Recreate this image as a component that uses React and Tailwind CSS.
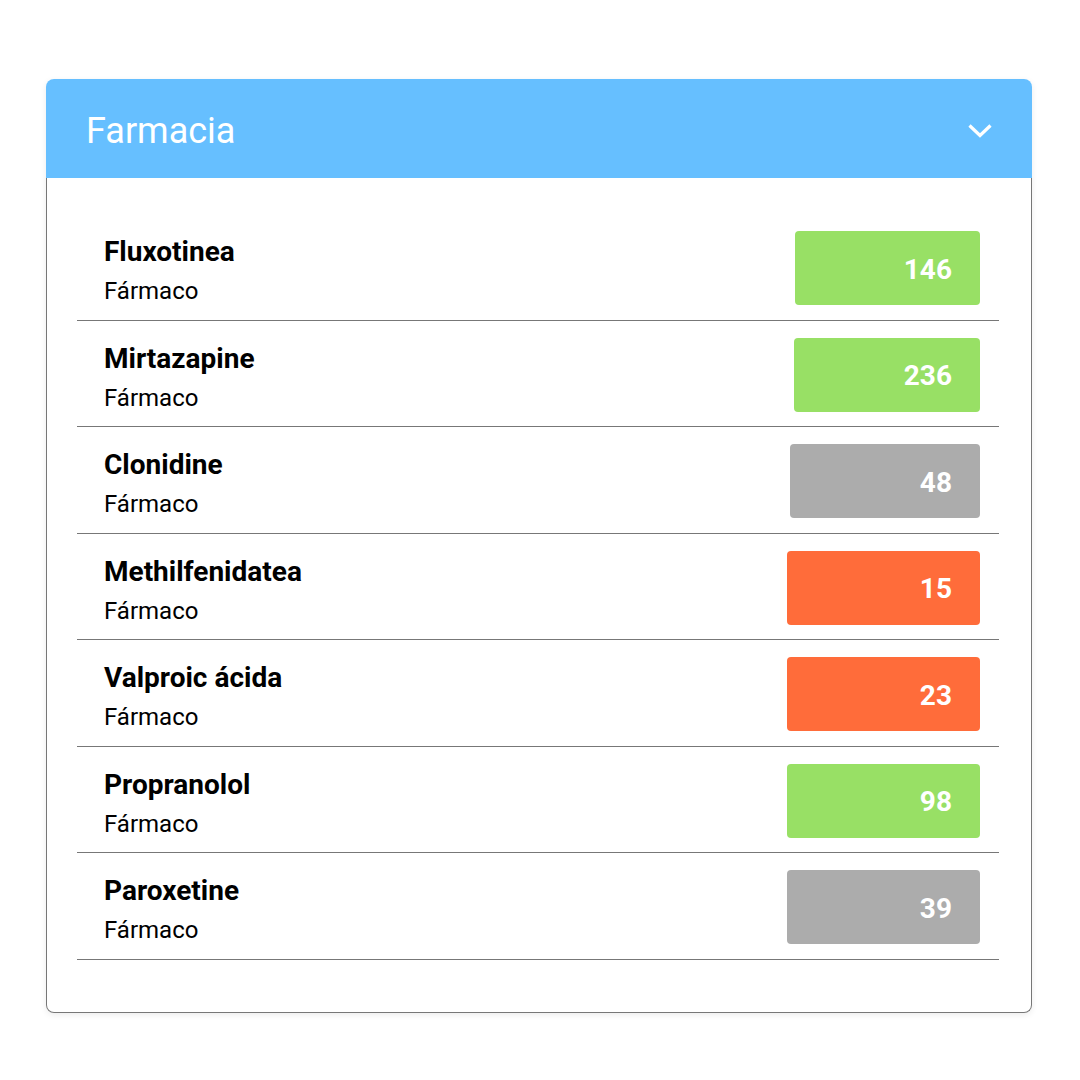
const drugs = [
  { name: 'Fluxotinea', value: 146, color: 'bg-[#98e065]', width: 'w-[185px]' },
  { name: 'Mirtazapine', value: 236, color: 'bg-[#98e065]', width: 'w-[186px]' },
  { name: 'Clonidine', value: 48, color: 'bg-[#acacac]', width: 'w-[190px]' },
  { name: 'Methilfenidatea', value: 15, color: 'bg-[#ff6c3a]', width: 'w-[193px]' },
  { name: 'Valproic ácida', value: 23, color: 'bg-[#ff6c3a]', width: 'w-[193px]' },
  { name: 'Propranolol', value: 98, color: 'bg-[#98e065]', width: 'w-[193px]' },
  { name: 'Paroxetine', value: 39, color: 'bg-[#acacac]', width: 'w-[193px]' },
];

export default function App() {
  return (
    <div className="min-h-[1080px] bg-white pt-[79px] pl-[46px] font-['Roboto',sans-serif]">
      <div className="w-[986px] rounded-lg shadow-[0_2px_6px_rgba(0,0,0,0.08)]">
        {/* Header */}
        <div className="flex h-[99px] items-center justify-between rounded-t-lg bg-[#66bfff] pt-[5px] pl-[40px] pr-[39px]">
          <h1 className="text-[36px] font-normal text-white">Farmacia</h1>
          <svg width="26" height="16" viewBox="0 0 26 16" fill="none">
            <path d="M2.5 2.5 L13 12.5 L23.5 2.5" stroke="white" strokeWidth="3.2" />
          </svg>
        </div>

        {/* List */}
        <div className="rounded-b-lg border border-t-0 border-[#777] pt-[36px] pb-[52px] pl-[30px] pr-[32px]">
          {drugs.map((d) => (
            <div
              key={d.name}
              className="flex h-[106.5px] items-start justify-between border-b border-[#777] pt-[17px] pl-[27px] pr-[19px]"
            >
              <div className="mt-[5px]">
                <div className="text-[28px] leading-[32px] font-bold text-black">{d.name}</div>
                <div className="mt-[9px] text-[24px] leading-[28px] text-black">Fármaco</div>
              </div>
              <div
                className={`flex h-[74px] items-center justify-end rounded pt-[3px] pr-[28px] text-[28px] font-bold text-white ${d.color} ${d.width}`}
              >
                {d.value}
              </div>
            </div>
          ))}
        </div>
      </div>
    </div>
  );
}
